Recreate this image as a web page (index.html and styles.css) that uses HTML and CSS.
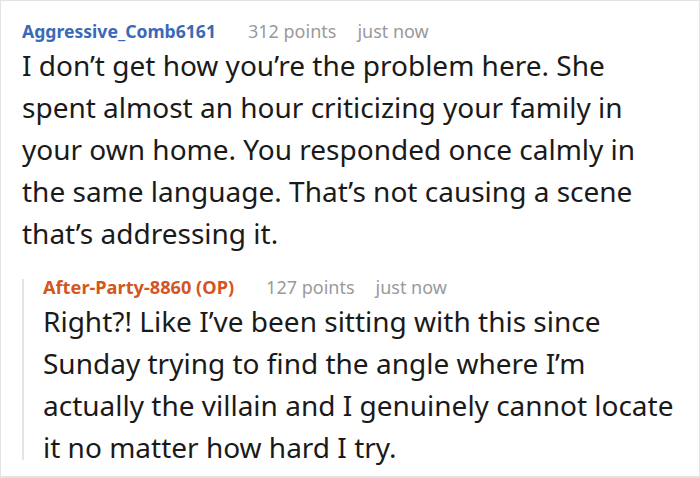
FILE: index.html
```html
<!DOCTYPE html>
<html>
<head>
<meta charset="utf-8">
<link rel="stylesheet" href="styles.css">
</head>
<body>
<div class="card">
  <div class="comment">
    <div class="meta">
      <span class="author">Aggressive_Comb6161</span>
      <span class="points">312 points</span>
      <span class="time">just now</span>
    </div>
    <p class="body">I don’t get how you’re the problem here. She spent almost an hour criticizing your family in your own home. You responded once calmly in the same language. That’s not causing a scene that’s addressing it.</p>
    <div class="reply">
      <div class="meta">
        <span class="author op">After-Party-8860 (OP)</span>
        <span class="points">127 points</span>
        <span class="time">just now</span>
      </div>
      <p class="body">Right?! Like I’ve been sitting with this since Sunday trying to find the angle where I’m actually the villain and I genuinely cannot locate it no matter how hard I try.</p>
    </div>
  </div>
</div>
</body>
</html>
```

FILE: styles.css
```css
html, body {
  margin: 0;
  padding: 0;
  background: #ffffff;
}
.card {
  box-sizing: border-box;
  width: 700px;
  height: 478px;
  border: 1px solid #e3e3e3;
  border-bottom-width: 2px;
  padding: 17px 20px 0 21px;
  font-family: "Noto Sans", sans-serif;
  color: #1a1a1a;
  overflow: hidden;
}
.meta {
  display: flex;
  align-items: baseline;
  font-size: 18px;
  line-height: 26px;
}
.author {
  font-size: 17.6px;
  font-weight: 700;
  color: #3a69b8;
  margin-right: 32px;
}
.author.op {
  font-size: 18.2px;
  color: #d4561f;
}
.points,
.time {
  color: #9a9a9a;
}
.points {
  margin-right: 21px;
}
.body {
  margin: 0;
  font-size: 28px;
  line-height: 42px;
}
.reply {
  margin-top: 20px;
  padding-left: 21px;
  background: linear-gradient(#e4e4e4, #e4e4e4) no-repeat 0 5px / 2px calc(100% - 13px);
}
```
